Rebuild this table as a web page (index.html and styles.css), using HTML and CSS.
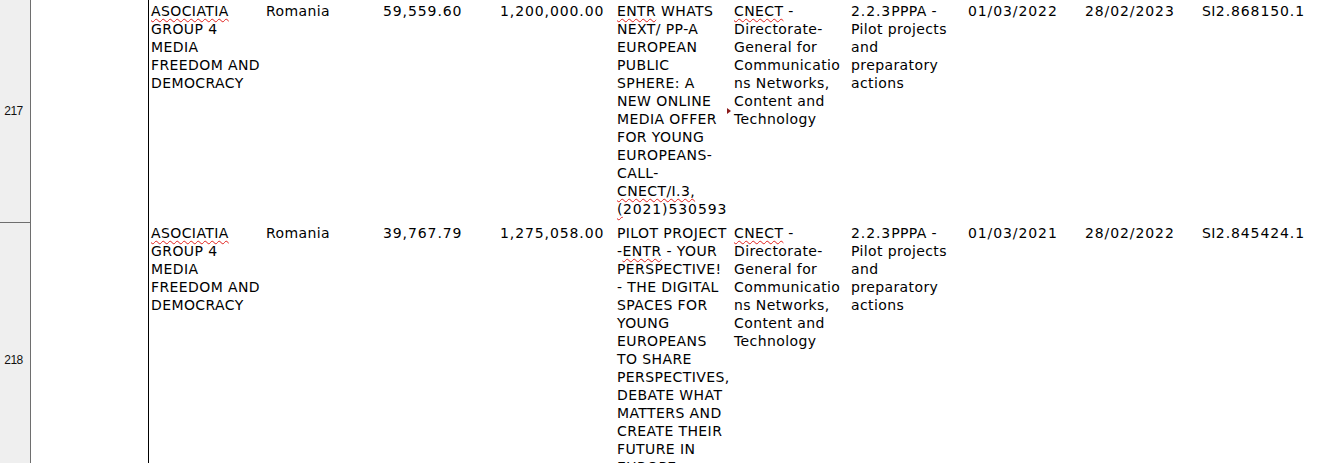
FILE: index.html
```html
<!DOCTYPE html>
<html lang="en">
<head>
    <meta charset="UTF-8">
    <title>Grants sheet</title>
    <link rel="stylesheet" href="styles.css">
</head>
<body>
    <div class="sheet">
        <div class="row row-217">
            <div class="rownum">217</div>
            <div class="cell"></div>
            <div class="cell frozen"><span class="spell">ASOCIATIA</span><br>GROUP 4<br>MEDIA<br>FREEDOM AND<br>DEMOCRACY</div>
            <div class="cell">Romania</div>
            <div class="cell num">59,559.60</div>
            <div class="cell num">1,200,000.00</div>
            <div class="cell clipped">
                <span class="spell">ENTR</span> WHATS<br>NEXT/ PP-A<br>EUROPEAN<br>PUBLIC<br>SPHERE: A<br>NEW ONLINE<br>MEDIA OFFER<br>FOR YOUNG<br>EUROPEANS-<br>CALL-<br><span class="spell">CNECT/I.3,</span><br><span class="spell">(</span><span class="num">2021)530593</span>
                <span class="clip-mark"></span>
            </div>
            <div class="cell"><span class="spell">CNECT</span> -<br>Directorate-<br>General for<br>Communicatio<br>ns Networks,<br>Content and<br>Technology</div>
            <div class="cell"><span class="num">2.2.3</span>PPPA -<br>Pilot projects<br>and<br>preparatory<br>actions</div>
            <div class="cell num">01/03/2022</div>
            <div class="cell num">28/02/2023</div>
            <div class="cell">SI<span class="num">2.868150.1</span></div>
            <div class="cell"></div>
        </div>
        <div class="row row-218">
            <div class="rownum">218</div>
            <div class="cell"></div>
            <div class="cell frozen"><span class="spell">ASOCIATIA</span><br>GROUP 4<br>MEDIA<br>FREEDOM AND<br>DEMOCRACY</div>
            <div class="cell">Romania</div>
            <div class="cell num">39,767.79</div>
            <div class="cell num">1,275,058.00</div>
            <div class="cell">PILOT PROJECT<br>-<span class="spell">ENTR</span> - YOUR<br>PERSPECTIVE!<br>- THE DIGITAL<br>SPACES FOR<br>YOUNG<br>EUROPEANS<br>TO SHARE<br>PERSPECTIVES,<br>DEBATE WHAT<br>MATTERS AND<br>CREATE THEIR<br>FUTURE IN<br>EUROPE</div>
            <div class="cell"><span class="spell">CNECT</span> -<br>Directorate-<br>General for<br>Communicatio<br>ns Networks,<br>Content and<br>Technology</div>
            <div class="cell"><span class="num">2.2.3</span>PPPA -<br>Pilot projects<br>and<br>preparatory<br>actions</div>
            <div class="cell num">01/03/2021</div>
            <div class="cell num">28/02/2022</div>
            <div class="cell">SI<span class="num">2.845424.1</span></div>
            <div class="cell"></div>
        </div>
    </div>
</body>
</html>
```

FILE: styles.css
```css
body {
    margin: 0;
    background-color: #ffffff;
    overflow: hidden;
    color: #000;
}

.sheet {
    width: 1328px;
    overflow: hidden;
}

.row {
    display: grid;
    grid-template-columns: 31px 117px 116px repeat(10, 117px);
    font-family: "DejaVu Sans", sans-serif;
    font-size: 14px;
    line-height: 18px;
    letter-spacing: 0.4px;
}

.row-217 {
    height: 222px;
}

.row-218 {
    height: 275px;
}

.rownum {
    box-sizing: border-box;
    background-color: #efefef;
    border-right: 1px solid #6e6e6e;
    display: flex;
    align-items: center;
    justify-content: center;
    font-family: "Liberation Sans", Arial, sans-serif;
    font-size: 12px;
    letter-spacing: -0.5px;
    padding-right: 3px;
    color: #111;
}

.row + .row .rownum {
    border-top: 1px solid #6e6e6e;
}

.cell {
    box-sizing: border-box;
    padding: 2px 2px 0;
    overflow: hidden;
    white-space: nowrap;
}

/* digits come out wider in the sheet */
.num {
    letter-spacing: 0.9px;
}

/* frozen column edge */
.frozen {
    border-left: 1px solid #000;
}

.clipped {
    position: relative;
    overflow: visible;
}

.clip-mark {
    position: absolute;
    right: 1px;
    top: calc(50% - 3px);
    width: 0;
    height: 0;
    border-left: 4px solid #8b1a1a;
    border-top: 3px solid transparent;
    border-bottom: 3px solid transparent;
}

.spell {
    text-decoration: underline wavy #e0201c;
    text-decoration-thickness: 1px;
    text-underline-offset: 2px;
}
```
